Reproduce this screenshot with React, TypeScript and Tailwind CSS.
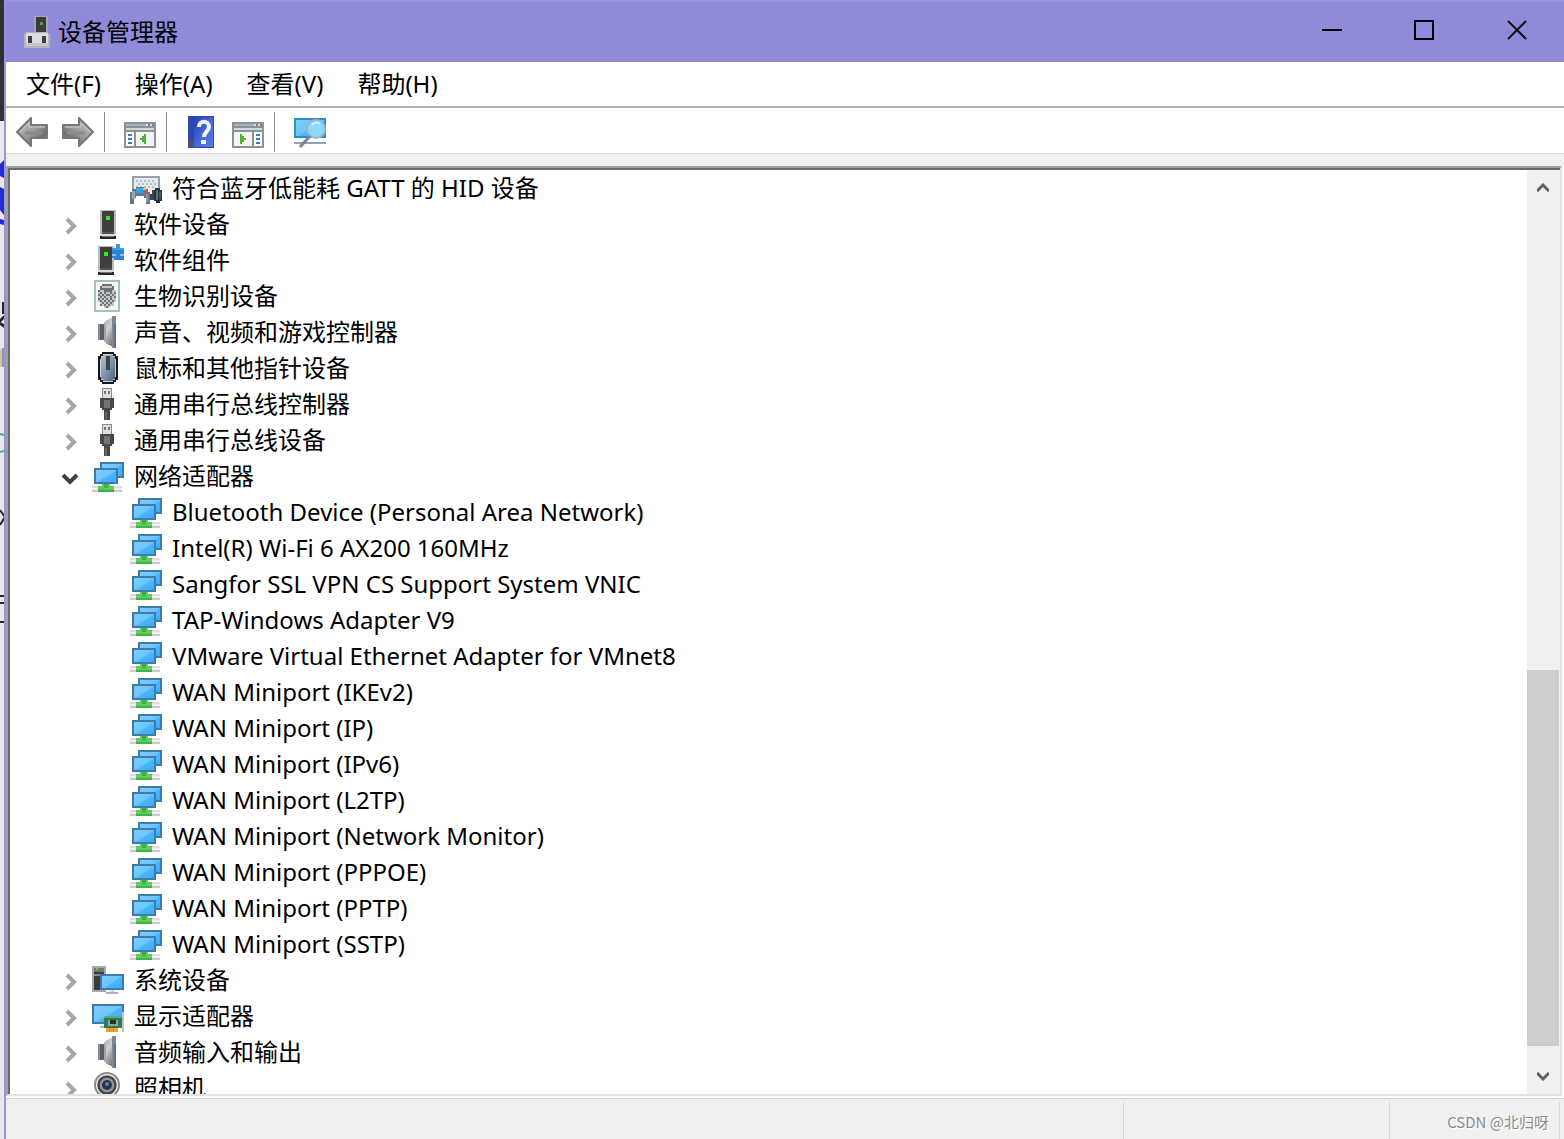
import { useState, type ReactNode } from "react";

type IconKind =
  | "hid"
  | "tower"
  | "component"
  | "finger"
  | "speaker"
  | "mouse"
  | "usb"
  | "network"
  | "system"
  | "display"
  | "camera";

function Art({ children }: { children: ReactNode }) {
  return (
    <svg viewBox="0 0 32 32" className="size-8 shrink-0" shapeRendering="crispEdges" aria-hidden="true">
      {children}
    </svg>
  );
}

function SharedGradients() {
  return (
    <svg className="absolute size-0" aria-hidden="true">
      <defs>
        <linearGradient id="sky" x1="0" y1="0" x2="1" y2="1">
          <stop offset="0" stopColor="#7fd0fb" />
          <stop offset="0.5" stopColor="#6cc5fb" />
          <stop offset="0.55" stopColor="#4bb7fc" />
          <stop offset="1" stopColor="#35abfb" />
        </linearGradient>
        <linearGradient id="steel" x1="0" y1="0" x2="0.6" y2="1">
          <stop offset="0" stopColor="#a4a8ae" />
          <stop offset="0.45" stopColor="#d0d2d5" />
          <stop offset="0.7" stopColor="#9da1a7" />
          <stop offset="1" stopColor="#70767f" />
        </linearGradient>
        <linearGradient id="mouseBody" x1="0" y1="0" x2="1" y2="1">
          <stop offset="0" stopColor="#b4c6d6" />
          <stop offset="0.5" stopColor="#7d95ad" />
          <stop offset="1" stopColor="#4a637c" />
        </linearGradient>
        <linearGradient id="arrow" x1="0" y1="0" x2="1" y2="1">
          <stop offset="0" stopColor="#c8c8c8" />
          <stop offset="0.5" stopColor="#9a9a9a" />
          <stop offset="0.75" stopColor="#707070" />
          <stop offset="1" stopColor="#a8a8a8" />
        </linearGradient>
        <linearGradient id="book" x1="0" y1="0" x2="1" y2="1">
          <stop offset="0" stopColor="#2344ad" />
          <stop offset="0.5" stopColor="#4566d6" />
          <stop offset="1" stopColor="#5b7ce4" />
        </linearGradient>
      </defs>
    </svg>
  );
}

function Tower({ x }: { x: number }) {
  return (
    <>
      <rect x={x} y="2" width="16" height="26" fill="#b9bcc0" />
      <rect x={x + 2} y="3" width="12" height="23" fill="#3f3f3f" />
      <rect x={x + 2} y="24" width="12" height="2" fill="#555" />
      <rect x={x} y="26" width="16" height="2" fill="#d7dade" />
      <rect x={x} y="28" width="16" height="3" fill="#262626" />
      <rect x={x + 2} y="28" width="12" height="1" fill="#777" />
      <rect x={x + 6} y="8" width="4" height="4" fill="#2bf02b" />
    </>
  );
}

function DeviceIcon({ kind }: { kind: IconKind }) {
  switch (kind) {
    case "hid":
      return (
        <Art>
          <rect x="2" y="4" width="28" height="16" fill="#98a2ab" />
          <rect x="4" y="6" width="24" height="14" fill="#e6eaee" />
          <path d="M6 9h20M8 12h18M6 15h20" stroke="#b4bcc4" strokeWidth="2" strokeDasharray="2 2" />
          <path d="M2 17h4v-2h8v2h4v3h2v12h-4v-6h-2v-2H6v2H4v6H0V20h2z" fill="#6b7681" />
          <rect x="2" y="19" width="3" height="8" fill="#9ba6b0" />
          <rect x="6" y="16" width="7" height="5" fill="#2aa6f2" />
          <rect x="13" y="16" width="3" height="2" fill="#f2c14a" />
          <rect x="14" y="19" width="3" height="2" fill="#d9503f" />
          <rect x="16" y="22" width="2" height="8" fill="#8e99a4" />
          <path d="M22 18h2v10h-4v-6h2z" fill="#3b4650" />
          <path d="M25 16h5v2h2v11h-2v2h-4v-2h-2V18h1z" fill="#2a3138" />
          <rect x="26" y="18" width="2" height="10" fill="#5e7080" />
          <rect x="29" y="19" width="2" height="8" fill="#465666" />
        </Art>
      );
    case "tower":
      return (
        <Art>
          <Tower x={8} />
        </Art>
      );
    case "component":
      return (
        <Art>
          <Tower x={6} />
          <path d="M20 4h4V0h4v4h4v12H20z" fill="#2a82d2" />
          <path d="M20 4h4V0h4v4h4v2H20z" fill="#439ae4" />
          <rect x="20" y="10" width="4" height="2" fill="#8fc0ec" />
          <rect x="28" y="10" width="4" height="2" fill="#8fc0ec" />
          <rect x="20" y="14" width="2" height="2" fill="#b9bcc0" />
        </Art>
      );
    case "finger":
      return (
        <Art>
          <rect x="3" y="1" width="24" height="30" fill="#f5f6f6" stroke="#a3c3ba" strokeWidth="2" />
          <path d="M10 4h10v2h2v4h2v12h-2v4h-4v2h-6v-2H8v-4H6V10h2V6h2z" fill="#c3c6c9" />
          <g fill="none" stroke="#6d7277" strokeWidth="2">
            <path d="M10 5h10M8 9h14" />
            <path d="M8 7h2M20 7h2M12 11h8" />
            <path d="M6 11h2M8 13h2M12 13h2M18 13h2M22 13h2M6 15h2M10 15h2M14 15h4M20 15h2" />
            <path d="M8 17h2M12 17h2M18 17h2M22 17h2M6 19h2M10 19h2M14 19h2M18 19h2" />
            <path d="M8 21h2M12 21h2M16 21h2M20 21h2M10 23h2M14 23h2M18 23h2M8 25h2M12 25h2M16 25h2M14 27h2" />
          </g>
        </Art>
      );
    case "speaker":
      return (
        <Art>
          <path d="M6 8h6v16H6z" fill="#555e69" />
          <path d="M6 8h2v16H6z" fill="#868e98" />
          <path d="M12 6h2V4h2V3h2V2h2V0h4v32h-4v-2h-2v-1h-2v-1h-2v-2h-2z" fill="url(#steel)" />
          <path d="M12 8h2v16h-2z" fill="#a2a6ab" />
          <path d="M20 0h4v32h-4z" fill="#808792" />
          <path d="M22 8h2v24h-2z" fill="#666e7a" />
        </Art>
      );
    case "mouse":
      return (
        <Art>
          <path d="M10 0h12v2h2v2h2v24h-2v2h-2v2H10v-2H8v-2H6V4h2V2h2z" fill="#16191d" />
          <path d="M11 2h10v2h2v3h1v18h-1v3h-2v2H11v-2H9v-3H8V7h1V4h2z" fill="#c6d0da" />
          <path d="M11 3h10v2h2v22h-2v2H11v-2H9V5h2z" fill="url(#mouseBody)" />
          <rect x="14" y="4" width="4" height="14" fill="#3f4246" />
        </Art>
      );
    case "usb":
      return (
        <Art>
          <rect x="10" y="0" width="10" height="11" fill="#8d8d8d" />
          <rect x="11" y="1" width="8" height="9" fill="#dedede" />
          <rect x="12" y="3" width="2" height="3" fill="#777" />
          <rect x="16" y="3" width="2" height="3" fill="#777" />
          <path d="M8 10h14v10h-2v2h-2v2h-6v-2h-2v-2H8z" fill="#474747" />
          <rect x="12" y="12" width="6" height="8" fill="#747474" />
          <rect x="12" y="24" width="6" height="8" fill="#444" />
          <rect x="13" y="24" width="2" height="8" fill="#666" />
        </Art>
      );
    case "network":
      return (
        <Art>
          <rect x="9" y="3" width="22" height="14" fill="url(#sky)" stroke="#3f7ba8" strokeWidth="2" />
          <rect x="3" y="9" width="22" height="14" fill="url(#sky)" stroke="#3f7ba8" strokeWidth="2" />
          <rect x="0" y="26" width="30" height="2" fill="#ddd" />
          <rect x="0" y="28" width="30" height="2" fill="#f0f0f0" />
          <rect x="0" y="30" width="30" height="2" fill="#c9c9c9" />
          <path d="M10 24h8v2h4v6H6v-6h4z" fill="#5fcb5f" />
          <path d="M12 24h4v4h-4z" fill="#3fae43" />
          <path d="M6 30h16v2H6z" fill="#3fae43" />
        </Art>
      );
    case "system":
      return (
        <Art>
          <rect x="0" y="2" width="14" height="26" fill="#a9a9a9" />
          <rect x="2" y="4" width="10" height="22" fill="#3b3b3b" />
          <rect x="2" y="4" width="10" height="4" fill="#757575" />
          <rect x="2" y="10" width="10" height="2" fill="#888" />
          <rect x="4" y="4" width="2" height="2" fill="#35e635" />
          <rect x="9" y="11" width="22" height="14" fill="url(#sky)" stroke="#3f7ba8" strokeWidth="2" />
          <rect x="18" y="26" width="4" height="2" fill="#d5dbe2" />
          <rect x="14" y="28" width="12" height="2" fill="#a6b2c2" />
        </Art>
      );
    case "display":
      return (
        <Art>
          <rect x="1" y="5" width="30" height="18" fill="url(#sky)" stroke="#3f7ba8" strokeWidth="2" />
          <rect x="8" y="26" width="6" height="2" fill="#a6b2c2" />
          <rect x="12" y="16" width="18" height="12" fill="#2c7a58" />
          <rect x="12" y="16" width="18" height="2" fill="#5aa985" />
          <rect x="16" y="20" width="10" height="6" fill="#8fa39c" />
          <rect x="18" y="20" width="6" height="4" fill="#26302c" />
          <rect x="14" y="28" width="12" height="4" fill="#f2a516" />
          <path d="M17 28v4M21 28v4" stroke="#d98908" />
          <rect x="30" y="12" width="2" height="20" fill="#c1c4c6" />
        </Art>
      );
    case "camera":
      return (
        <Art>
          <g shapeRendering="auto">
            <circle cx="15" cy="13" r="12" fill="#f2f2f2" stroke="#8a8a8a" strokeWidth="2" />
            <circle cx="15" cy="13" r="8.5" fill="#8f979f" stroke="#474747" strokeWidth="2.5" />
            <circle cx="15" cy="13" r="5" fill="#27354a" />
            <circle cx="15" cy="12" r="2" fill="#5480b4" />
            <path d="M5 26h20l2 6H3z" fill="#777" />
          </g>
        </Art>
      );
  }
}

type Category = { label: string; icon: IconKind; children?: string[] };

const categories: Category[] = [
  { label: "软件设备", icon: "tower" },
  { label: "软件组件", icon: "component" },
  { label: "生物识别设备", icon: "finger" },
  { label: "声音、视频和游戏控制器", icon: "speaker" },
  { label: "鼠标和其他指针设备", icon: "mouse" },
  { label: "通用串行总线控制器", icon: "usb" },
  { label: "通用串行总线设备", icon: "usb" },
  {
    label: "网络适配器",
    icon: "network",
    children: [
      "Bluetooth Device (Personal Area Network)",
      "Intel(R) Wi-Fi 6 AX200 160MHz",
      "Sangfor SSL VPN CS Support System VNIC",
      "TAP-Windows Adapter V9",
      "VMware Virtual Ethernet Adapter for VMnet8",
      "WAN Miniport (IKEv2)",
      "WAN Miniport (IP)",
      "WAN Miniport (IPv6)",
      "WAN Miniport (L2TP)",
      "WAN Miniport (Network Monitor)",
      "WAN Miniport (PPPOE)",
      "WAN Miniport (PPTP)",
      "WAN Miniport (SSTP)",
    ],
  },
  { label: "系统设备", icon: "system" },
  { label: "显示适配器", icon: "display" },
  { label: "音频输入和输出", icon: "speaker" },
  { label: "照相机", icon: "camera" },
];

function DeviceRow({ label, icon }: { label: string; icon: IconKind }) {
  return (
    <li className="flex h-9 items-start pl-[120px] pt-px">
      <DeviceIcon kind={icon} />
      <span className="pl-2.5 leading-8 whitespace-nowrap">{label}</span>
    </li>
  );
}

function CategoryRow({ item }: { item: Category }) {
  const [open, setOpen] = useState(Boolean(item.children));
  return (
    <li>
      <div className="flex h-9 items-start pl-[50px] pt-px">
        <button
          type="button"
          aria-label={item.label}
          aria-expanded={open}
          onClick={() => setOpen(!open)}
          className="mr-3 flex h-9 w-5 items-center justify-center"
        >
          {open ? (
            <svg viewBox="0 0 20 20" className="size-5" fill="none" stroke="#404040" strokeWidth="4">
              <path d="M3 7l7 7 7-7" />
            </svg>
          ) : (
            <svg viewBox="0 0 20 20" className="size-5" fill="none" stroke="#a6a6a6" strokeWidth="4">
              <path d="M7 3l7 7-7 7" />
            </svg>
          )}
        </button>
        <DeviceIcon kind={item.icon} />
        <span className="pl-2.5 leading-8 whitespace-nowrap">{item.label}</span>
      </div>
      {open && item.children && (
        <ul>
          {item.children.map((name) => (
            <DeviceRow key={name} label={name} icon="network" />
          ))}
        </ul>
      )}
    </li>
  );
}

function BackgroundStrip() {
  return (
    <div className="w-1 shrink-0 overflow-hidden bg-[#e8e8ea]" aria-hidden="true">
      <svg viewBox="0 0 4 640" className="h-[640px] w-1" fill="none">
        <rect width="4" height="121" fill="#303134" />
        <path d="M0 164l4-4v18l-4-2zM0 187l4 2v26l-4-5zM0 219l4 1v5l-4-1z" fill="#242cd0" />
        <path d="M2 302h2v12H2zM0 319l4-4v4l-4 4zM0 322l4 2v4l-4-3z" fill="#262626" />
        <path d="M0 349h2v18H0z" fill="#dcbfae" />
        <path d="M2 348h2v19H2z" fill="#8c99aa" />
        <path d="M0 411l4 1M0 429l4-1" stroke="#4db56a" strokeWidth="2" transform="translate(0 23)" />
        <path d="M0 510l5 7-5 8" stroke="#262626" strokeWidth="2" />
        <path d="M0 596h4M0 603h4M0 622h4" stroke="#262626" strokeWidth="2" />
      </svg>
    </div>
  );
}

function TitleBar() {
  return (
    <header className="flex h-[62px] shrink-0 items-stretch border-t-2 border-[#9893dc] bg-[#8f8bd8]">
      <h1 className="flex flex-1 items-center gap-2 pl-[18px] text-2xl font-normal">
        <svg viewBox="0 0 26 32" className="h-8 w-[26px]" shapeRendering="crispEdges" aria-hidden="true">
          <rect x="10" y="0" width="14" height="18" fill="#a5a5b5" />
          <rect x="12" y="1" width="10" height="16" fill="#3b3b3f" />
          <rect x="16" y="6" width="3" height="3" fill="#38b438" />
          <path d="M2 16h22v2h2v14H0V18h2z" fill="#b4b4bc" />
          <rect x="2" y="17" width="22" height="13" fill="#dcdcdf" />
          <rect x="2" y="27" width="22" height="3" fill="#c6c6ca" />
          <rect x="4" y="20" width="4" height="7" fill="#3d3d42" />
          <rect x="18" y="20" width="4" height="7" fill="#3d3d42" />
        </svg>
        设备管理器
      </h1>
      <button type="button" aria-label="最小化" className="flex w-[92px] items-center justify-center pb-1">
        <svg viewBox="0 0 20 20" className="size-5" shapeRendering="crispEdges">
          <path d="M0 10h20" stroke="#000" strokeWidth="2" />
        </svg>
      </button>
      <button type="button" aria-label="最大化" className="flex w-[92px] items-center justify-center pb-1">
        <svg viewBox="0 0 20 20" className="size-5" shapeRendering="crispEdges">
          <rect x="1" y="1" width="18" height="18" fill="none" stroke="#000" strokeWidth="2" />
        </svg>
      </button>
      <button type="button" aria-label="关闭" className="flex w-[94px] items-center justify-center pb-1">
        <svg viewBox="0 0 20 20" className="size-5">
          <path d="M1 1l18 18M19 1L1 19" stroke="#111" strokeWidth="2" />
        </svg>
      </button>
    </header>
  );
}

function ArrowIcon({ flip }: { flip?: boolean }) {
  return (
    <svg viewBox="0 0 32 32" className={flip ? "size-8 -scale-x-100" : "size-8"}>
      <path
        d="M1 16L15 2v7h16v13H15v8z"
        fill="url(#arrow)"
        stroke="#777"
        strokeWidth="2"
        strokeLinejoin="round"
      />
      <path d="M4 16l9-9v4h16" fill="none" stroke="#cfcfcf" strokeWidth="1" />
      <path d="M9 17h18" stroke="#8a8a8a" strokeWidth="3" />
    </svg>
  );
}

function PaneIcon({ right }: { right?: boolean }) {
  return (
    <svg viewBox="0 0 32 32" className="size-8" shapeRendering="crispEdges">
      <rect x="0" y="6" width="32" height="26" fill="#8b9299" />
      <rect x="2" y="8" width="28" height="2" fill="#dfe3e8" />
      <rect x="2" y="8" width="20" height="2" fill="#aab4c0" />
      <rect x="24" y="8" width="2" height="2" fill="#6f7f95" />
      <rect x="28" y="8" width="2" height="2" fill="#6f7f95" />
      <rect x="2" y="12" width="28" height="2" fill="#d3d8de" />
      {right ? (
        <>
          <rect x="2" y="16" width="18" height="14" fill="#f4f4f4" />
          <rect x="22" y="16" width="8" height="14" fill="#fff" />
          <path d="M24 19h4M24 23h4M24 27h4" stroke="#4179b5" strokeWidth="2" />
          <path d="M8 18h2v2h2v2h2v2h-2v2h-2v2H8z" fill="#4fb52b" />
        </>
      ) : (
        <>
          <rect x="2" y="16" width="8" height="14" fill="#fff" />
          <rect x="12" y="16" width="18" height="14" fill="#f4f4f4" />
          <path d="M4 19h4M4 23h4M4 27h4" stroke="#4179b5" strokeWidth="2" />
          <path d="M22 18h-2v2h-2v2h-2v2h2v2h2v2h2z" fill="#4fb52b" />
        </>
      )}
    </svg>
  );
}

function ToolButton({ label, children }: { label: string; children: ReactNode }) {
  return (
    <button type="button" aria-label={label} title={label} className="size-8">
      {children}
    </button>
  );
}

function Separator() {
  return <span className="h-10 w-px bg-[#8c8c8c]" />;
}

function Toolbar() {
  return (
    <div role="toolbar" className="flex h-[46px] shrink-0 items-center border-b border-[#d9d9d9] bg-white pt-[3px] pl-2.5">
      <div className="flex gap-3.5 pr-2.5">
        <ToolButton label="后退">
          <ArrowIcon />
        </ToolButton>
        <ToolButton label="前进">
          <ArrowIcon flip />
        </ToolButton>
      </div>
      <Separator />
      <div className="flex pr-2.5 pl-[19px]">
        <ToolButton label="显示/隐藏控制台树">
          <PaneIcon />
        </ToolButton>
      </div>
      <Separator />
      <div className="flex gap-3.5 pr-2.5 pl-[19px]">
        <ToolButton label="帮助">
          <svg viewBox="0 0 32 32" className="size-8">
            <rect x="2" y="0" width="26" height="32" fill="#2b49b5" />
            <rect x="8" y="1" width="19" height="30" fill="url(#book)" />
            <rect x="2" y="24" width="6" height="8" fill="#45507e" />
            <path d="M13 11c0-7 10-7 10 0 0 4-5 5-5 10" fill="none" stroke="#f4f5fb" strokeWidth="4" />
            <rect x="15" y="24" width="5" height="4" fill="#f4f5fb" />
          </svg>
        </ToolButton>
        <ToolButton label="显示/隐藏操作窗格">
          <PaneIcon right />
        </ToolButton>
      </div>
      <Separator />
      <div className="flex pl-[19px]">
        <ToolButton label="扫描检测硬件改动">
          <svg viewBox="0 0 32 32" className="size-8">
            <rect x="1" y="3" width="30" height="18" fill="url(#sky)" stroke="#2f8fc4" strokeWidth="2" />
            <rect x="0" y="26" width="32" height="2" fill="#8fa3b8" />
            <circle cx="22" cy="13" r="9" fill="#8dd9fb" stroke="#9fb6c6" strokeWidth="2" />
            <path d="M18 9c2-3 6-3 8-1" fill="none" stroke="#d4f2fe" strokeWidth="2" />
            <path d="M16 20L6 31" stroke="#7b8791" strokeWidth="3" />
          </svg>
        </ToolButton>
      </div>
    </div>
  );
}

function ScrollBar() {
  return (
    <div className="flex w-[33px] shrink-0 flex-col bg-[#f0f0f0] pr-px">
      <button type="button" aria-label="向上滚动" className="flex h-8 shrink-0 items-center justify-center pt-1">
        <svg viewBox="0 0 12 12" className="size-3" fill="none" stroke="#606060" strokeWidth="3">
          <path d="M0 9l6-6 6 6" />
        </svg>
      </button>
      <div className="flex min-h-0 flex-1 flex-col">
        <div className="flex-[468]" />
        <div className="flex-[376] bg-[#cdcdcd]" />
        <div className="flex-[16]" />
      </div>
      <button type="button" aria-label="向下滚动" className="flex h-8 shrink-0 items-center justify-center pb-1">
        <svg viewBox="0 0 12 12" className="size-3" fill="none" stroke="#606060" strokeWidth="3">
          <path d="M0 3l6 6 6-6" />
        </svg>
      </button>
    </div>
  );
}

export default function App() {
  return (
    <div className="flex h-screen overflow-hidden bg-white font-['Noto_Sans','Noto_Sans_CJK_SC',sans-serif] text-black">
      <SharedGradients />
      <BackgroundStrip />
      <div className="flex min-w-0 flex-1 flex-col border-l-2 border-[#9893dc]">
        <TitleBar />
        <nav className="flex h-[46px] shrink-0 items-center gap-[34px] border-b-2 border-[#b0b0b0] pl-5 text-2xl">
          {["文件(F)", "操作(A)", "查看(V)", "帮助(H)"].map((name) => (
            <button key={name} type="button" className="whitespace-nowrap">
              {name}
            </button>
          ))}
        </nav>
        <Toolbar />
        <div className="h-3 shrink-0 bg-[#f0f0f0]" />
        <main className="mr-0.5 mb-0.5 flex min-h-0 flex-1 border-2 border-t-[#a0a0a0] border-r-[#e3e3e3] border-b-[#e3e3e3] border-l-[#a0a0a0]">
          <div className="flex min-h-0 min-w-0 flex-1 border-t-2 border-l-2 border-[#696969]">
            <ul className="min-w-0 flex-1 overflow-hidden pt-px text-2xl">
              <DeviceRow label="符合蓝牙低能耗 GATT 的 HID 设备" icon="hid" />
              {categories.map((item) => (
                <CategoryRow key={item.label} item={item} />
              ))}
            </ul>
            <ScrollBar />
          </div>
        </main>
        <footer className="flex h-[41px] shrink-0 border-t border-[#d7d7d7] bg-[#f0f0f0] pt-[3px] pr-1">
          <div className="flex-1 border-r border-[#d7d7d7]" />
          <div className="w-[266px] border-r border-[#d7d7d7]" />
          <div className="flex w-[170px] items-center justify-end border-r border-[#d7d7d7] pt-1 pr-2.5 font-['Noto_Sans_CJK_SC',sans-serif] text-[15px] whitespace-nowrap text-[#8c8c8c] [text-shadow:1px_1px_0_#fff]">
            CSDN @北归呀
          </div>
        </footer>
      </div>
    </div>
  );
}
